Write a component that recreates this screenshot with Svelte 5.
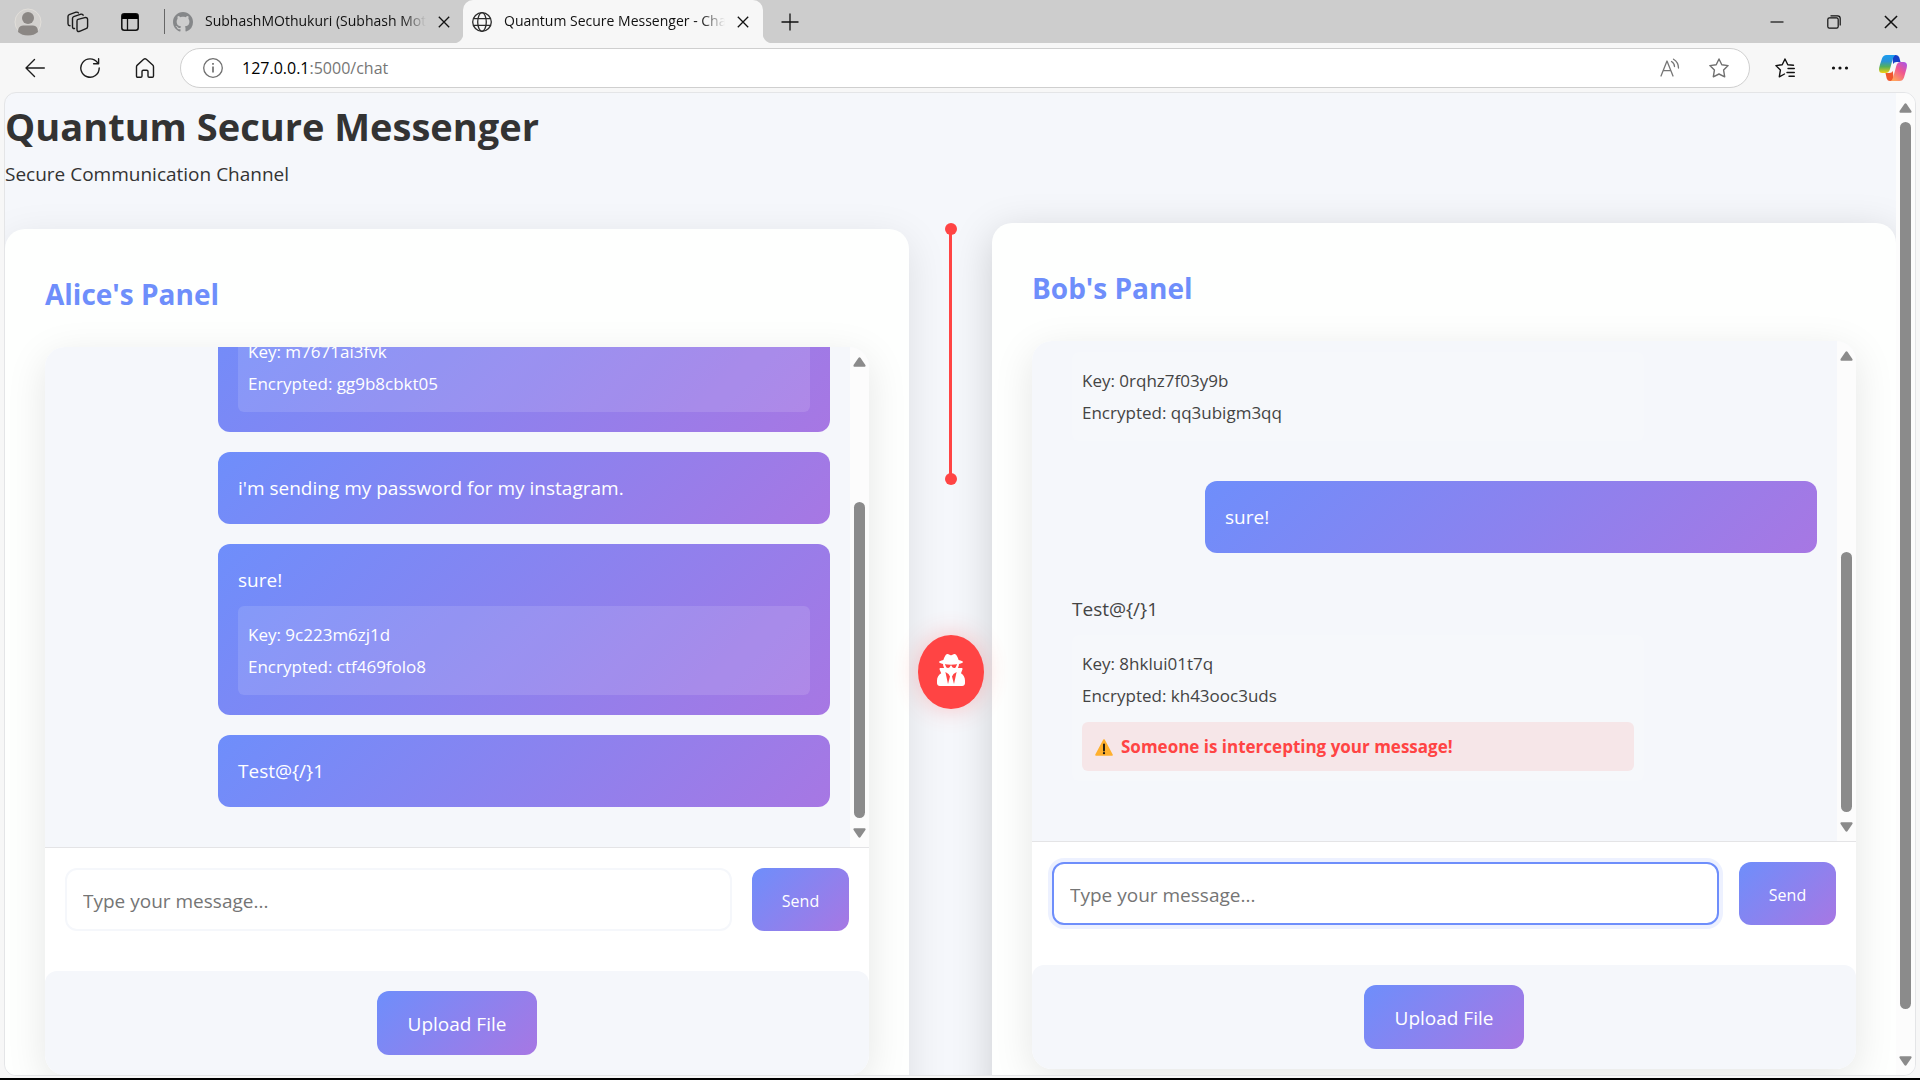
<script>
  const alice = {
    name: 'Alice',
    hovered: false,
    scroll: { before: 126, thumb: 316, after: 0 },
    messages: [
      { sent: true, text: '', key: 'm7671ai3fvk', encrypted: 'gg9b8cbkt05' },
      { sent: true, text: "i'm sending my password for my instagram." },
      { sent: true, text: 'sure!', key: '9c223m6zj1d', encrypted: 'ctf469folo8' },
      { sent: true, text: 'Test@{/}1' }
    ]
  };
  const bob = {
    name: 'Bob',
    hovered: true,
    scroll: { before: 182, thumb: 260, after: 0 },
    messages: [
      { sent: false, text: '', key: '0rqhz7f03y9b', encrypted: 'qq3ubigm3qq' },
      { sent: true, text: 'sure!' },
      { sent: false, text: 'Test@{/}1', key: '8hklui01t7q', encrypted: 'kh43ooc3uds', alert: 'Someone is intercepting your message!' }
    ]
  };
</script>

{#snippet scrollbar(s)}
  <div class="scrollbar" aria-hidden="true">
    <svg width="13" height="10" viewBox="0 0 13 10"><path d="M5.4.9Q6.5-.5 7.6.9L12.4 8Q13 9.6 11.6 9.8H1.4Q0 9.6.6 8Z" fill="#8b8b8b" /></svg>
    <div class="track">
      <span style="flex-grow: {s.before}"></span>
      <span class="thumb" style="flex-grow: {s.thumb}"></span>
      <span style="flex-grow: {s.after}"></span>
    </div>
    <svg width="13" height="10" viewBox="0 0 13 10"><path d="M5.4 9.1Q6.5 10.5 7.6 9.1L12.4 2Q13 .4 11.6.2H1.4Q0 .4.6 2Z" fill="#8b8b8b" /></svg>
  </div>
{/snippet}

{#snippet cross(size)}
  <svg width={size} height={size} viewBox="0 0 12 12" fill="none" stroke="#111" stroke-width="1.3"><path d="M.8.8l10.4 10.4M11.2.8.8 11.2" /></svg>
{/snippet}

{#snippet panel(p)}
  <section class="panel" class:hovered={p.hovered}>
    <h2>{p.name}'s Panel</h2>
    <div class="chat">
      <div class="history">
        <div class="messages">
          {#each p.messages as m}
            <article class="message" class:sent={m.sent}>
              <p class="text">{m.text}</p>
              {#if m.key}
                <div class="details" class:alerted={m.alert}>
                  <p>Key: {m.key}</p>
                  <p>Encrypted: {m.encrypted}</p>
                  {#if m.alert}
                    <div class="alert" role="alert">
                      <svg width="18" height="17" viewBox="0 0 18 17"><path d="M9 1 17 16H1Z" fill="#ffb02e" stroke="#ffb02e" stroke-width="1.6" stroke-linejoin="round" /><path d="M9 5.5v6" stroke="#111" stroke-width="1.8" stroke-linecap="round" /><circle cx="9" cy="14.2" r="1.1" fill="#111" /></svg>
                      <strong>{m.alert}</strong>
                    </div>
                  {/if}
                </div>
              {/if}
            </article>
          {/each}
        </div>
        {@render scrollbar(p.scroll)}
      </div>
      <form class="compose" onsubmit={(e) => e.preventDefault()}>
        <input type="text" class:focused={p.hovered} placeholder="Type your message..." aria-label="Message from {p.name}" />
        <button type="submit" class="send">Send</button>
      </form>
      <div class="upload"><button type="button">Upload File</button></div>
    </div>
  </section>
{/snippet}

<div class="browser">
  <header class="tabs">
    <div class="tools">
      <button aria-label="Profile">
        <svg width="28" height="28" viewBox="0 0 28 28"><circle cx="14" cy="14" r="13" fill="#d3d1ce" stroke="#e2dfda" /><circle cx="14" cy="10" r="6" fill="#8b8784" /><path d="M4 24q0-6.500 5-6.500h10q5 0 5 6.500-4 3.500-10 3.500T4 24z" fill="#8b8784" /></svg>
      </button>
      <button aria-label="Workspaces">
        <svg width="22" height="22" viewBox="0 0 22 22" fill="none" stroke="#1c1c1c" stroke-width="1.400" stroke-linejoin="round" stroke-linecap="round"><path d="M11 8.400 17.800 6.600q2.800-.5 2.800 2v6.800q0 1.800-1.600 2.300l-6.400 2.600q-2.600.7-2.600-1.500V10q0-1.300 1-1.600z" /><path d="M7.500 17.500q-2 .2-2-1.800V7.400q0-1.400 1.200-1.800L14 3.200q1.800-.4 2.200 1" /><path d="M3 14.800q-2-.2-2-2V5.400q0-1.400 1.200-1.800L9 1.200q1.800-.4 2.500.8" /></svg>
      </button>
      <button aria-label="Tab actions">
        <svg width="18" height="18" viewBox="0 0 18 18"><rect x=".8" y=".8" width="16.400" height="16.400" rx="2.500" fill="none" stroke="#111" stroke-width="1.500" /><path d="M1 6V3Q1 1 3 1h12q2 0 2 2v3z" /><path d="M6.500 6v11" stroke="#111" stroke-width="1.300" /></svg>
      </button>
    </div>
    <div class="tab">
      <svg width="20" height="20" viewBox="0 0 16 16" fill="#858789"><path d="M8 0C3.580 0 0 3.580 0 8c0 3.540 2.290 6.530 5.470 7.590.4.070.55-.17.55-.38 0-.19-.01-.82-.01-1.490-2.010.37-2.530-.49-2.690-.94-.09-.23-.48-.94-.82-1.130-.28-.15-.68-.52-.01-.53.63-.01 1.080.58 1.230.82.72 1.210 1.870.87 2.330.66.070-.52.280-.87.510-1.070-1.780-.2-3.640-.89-3.640-3.950 0-.87.310-1.590.82-2.150-.08-.2-.36-1.020.08-2.120 0 0 .67-.21 2.200.82.640-.18 1.320-.27 2-.27s1.360.09 2 .27c1.530-1.040 2.200-.82 2.200-.82.440 1.100.16 1.920.08 2.120.51.56.82 1.270.82 2.150 0 3.070-1.870 3.750-3.650 3.950.29.25.54.73.54 1.480 0 1.070-.01 1.930-.01 2.200 0 .21.150.46.55.38A8.010 8.010 0 0 0 16 8c0-4.420-3.580-8-8-8z" /></svg>
      <span class="title">SubhashMOthukuri (Subhash Mothukuri)</span>
      <button aria-label="Close tab">{@render cross(12)}</button>
    </div>
    <div class="tab active">
      <svg width="20" height="20" viewBox="0 0 20 20" fill="none" stroke="#2b2b2b" stroke-width="1.300"><circle cx="10" cy="10" r="9.300" /><ellipse cx="10" cy="10" rx="4.300" ry="9.300" /><path d="M1.500 6.700h17M1.500 13.300h17" /></svg>
      <span class="title">Quantum Secure Messenger - Chat</span>
      <button aria-label="Close tab">{@render cross(12)}</button>
    </div>
    <button class="new-tab" aria-label="New tab">
      <svg width="18" height="18" viewBox="0 0 18 18" stroke="#111" stroke-width="1.300"><path d="M9 .5v17M.5 9h17" /></svg>
    </button>
    <div class="window">
      <button aria-label="Minimize"><svg width="14" height="14" viewBox="0 0 14 14" stroke="#111" stroke-width="1.200"><path d="M.5 7h13" /></svg></button>
      <button aria-label="Restore"><svg width="14" height="14" viewBox="0 0 14 14" fill="none" stroke="#111" stroke-width="1.200"><rect x=".8" y="2.800" width="10.400" height="10.400" rx="1.600" /><path d="M3.500.8h7q2.700 0 2.700 2.700v7" /></svg></button>
      <button aria-label="Close window">{@render cross(14)}</button>
    </div>
  </header>

  <nav class="toolbar" aria-label="Browser">
    <div class="nav">
      <button aria-label="Back"><svg width="20" height="20" viewBox="0 0 20 20" fill="none" stroke="#1c1c1c" stroke-width="1.400" stroke-linecap="round" stroke-linejoin="round"><path d="M19.300 10H1M9.500 1.500 1 10l8.500 8.500" /></svg></button>
      <button aria-label="Refresh"><svg width="20" height="20" viewBox="0 0 20 20" fill="none" stroke="#1c1c1c" stroke-width="1.400" stroke-linecap="round" stroke-linejoin="round"><path d="M19.200 10A9.200 9.200 0 1 1 17.500 4.700M18.600.8v5h-5" /></svg></button>
      <button aria-label="Home"><svg width="20" height="20" viewBox="0 0 20 20" fill="none" stroke="#1c1c1c" stroke-width="1.400" stroke-linejoin="round"><path d="M1.500 8.800q0-1 .8-1.700l6.400-5.800q1.300-1 2.600 0l6.400 5.800q.8.7.8 1.700V18q0 1.200-1.200 1.200h-3.100q-1.200 0-1.200-1.200v-4.500q0-1.300-1.300-1.300H8.300q-1.300 0-1.300 1.300V18q0 1.200-1.200 1.200H2.700q-1.200 0-1.200-1.200z" /></svg></button>
    </div>
    <div class="address">
      <svg width="20" height="20" viewBox="0 0 20 20" fill="none" stroke="#707070" stroke-width="1.300"><circle cx="10" cy="10" r="9.300" /><path d="M10 8.500v6M10 5v1.800" stroke-width="1.700" /></svg>
      <span class="url">127.0.0.1<span>:5000/chat</span></span>
      <button aria-label="Read aloud"><svg width="20" height="20" viewBox="0 0 20 20" fill="none" stroke="#767676" stroke-width="1.300" stroke-linecap="round" stroke-linejoin="round"><path d="M1 18 7 3l6 15M3.200 12.600h7.600M11.500 3.500q3 1.800 3 5M13.500 1.200q5 3 5 8.800" /></svg></button>
      <button aria-label="Favorite"><svg width="20" height="20" viewBox="0 0 20 20" fill="none" stroke="#707070" stroke-width="1.400" stroke-linejoin="round"><path d="M10 1l2.800 5.700 6.300.9-4.500 4.500 1.100 6.700L10 16l-5.700 2.800 1.100-6.700L.9 7.600l6.300-.9z" /></svg></button>
    </div>
    <div class="actions">
      <button aria-label="Favorites list"><svg width="20" height="20" viewBox="0 0 20 20" fill="none" stroke="#111" stroke-width="1.400" stroke-linejoin="round" stroke-linecap="round"><path d="M18.500 7.200l-5.700-.5L10 1 7.200 6.700l-6.300.9 4.500 4.500-1.100 6.700L9.500 16M13 10.500h6.300M12 14.500h7.300M14 18.300h5.300" /></svg></button>
      <button aria-label="Settings and more"><svg width="18" height="18" viewBox="0 0 18 18" fill="#111"><circle cx="2.500" cy="9" r="1.600" /><circle cx="9" cy="9" r="1.600" /><circle cx="15.500" cy="9" r="1.600" /></svg></button>
      <button aria-label="Copilot">
        <svg width="28" height="26" viewBox="0 0 28 26">
          <defs>
            <linearGradient id="cpA" x1="0" y1="0" x2="0" y2="1"><stop offset="0" stop-color="#1b9df0" /><stop offset=".35" stop-color="#2a93d8" /><stop offset=".65" stop-color="#54b05b" /><stop offset="1" stop-color="#f4cf10" /></linearGradient>
            <linearGradient id="cpB" x1="1" y1="0" x2=".3" y2="1"><stop offset="0" stop-color="#a455ee" /><stop offset=".5" stop-color="#f0578f" /><stop offset="1" stop-color="#ffa35c" /></linearGradient>
          </defs>
          <path d="M13 0h4q2.500 0 3.300 2.500L21.500 7h-4q-2.500 0-3.300 2z" fill="#1640c8" />
          <path d="M15 26h-4q-2.500 0-3.300-2.500L6.500 18h4q2.500 0 3.300-2z" fill="#f0562d" />
          <path d="M7.500 0h9q-2 1-2.600 3.500L11 14q-1 4-4.500 4H3.500Q0 18 0 14.500q0-1.500 1-5L3 3.500Q4.200 0 7.500 0z" fill="url(#cpA)" />
          <path d="M20.500 26h-9q2-1 2.600-3.500L17 12q1-5 4.500-5h3q3.500 0 3.500 3.500 0 1.500-1 5l-2 7q-1.200 3.500-4.500 3.500z" fill="url(#cpB)" />
        </svg>
      </button>
    </div>
  </nav>

  <div class="viewport">
    <main>
      <div class="intro">
        <h1>Quantum Secure Messenger</h1>
        <p>Secure Communication Channel</p>
      </div>
      <div class="channel">
        {@render panel(alice)}
        <div class="link">
          <div class="wire"></div>
          <button class="spy" aria-label="Intercept messages">
            <svg width="28" height="32" viewBox="0 0 448 512" fill="#fff"><path d="M383.900 308.300l23.900-62.600c4-10.500-3.700-21.700-15-21.700h-58.500c11-18.900 17.800-40.600 17.800-64v-.3c39.200-7.800 64-19.100 64-31.700 0-13.300-27.300-25.100-70.100-33-9.200-32.800-27-65.800-40.600-82.800-9.500-11.900-25.900-15.600-39.500-8.800l-27.600 13.800c-9 4.500-19.600 4.500-28.600 0L182.100 3.400c-13.600-6.800-30-3.100-39.500 8.800-13.500 17-31.400 50-40.600 82.800-42.700 7.900-70 19.700-70 33 0 12.600 24.800 23.900 64 31.700v.3c0 23.400 6.800 45.100 17.800 64H56.300c-11.500 0-19.200 11.700-14.700 22.300l25.800 60.200C27.300 329.800 0 372.700 0 422.400v44.800C0 491.900 20.100 512 44.800 512h358.400c24.700 0 44.800-20.100 44.800-44.800v-44.800c0-48.400-25.800-90.400-64.100-114.100zM176 480l-41.600-192 49.600 32 24 40-32 120zm96 0l-32-120 24-40 49.600-32L272 480zm41.700-298.500c-3.900 11.900-7 24.600-16.500 33.400-10.100 9.300-48 22.400-64-25-2.800-8.400-15.400-8.400-18.300 0-17 50.200-56 32.400-64 25-9.500-8.800-12.700-21.500-16.500-33.400-.8-2.500-6.300-5.700-6.300-5.800v-10.800c28.300 3.600 61 5.800 96 5.800s67.700-2.100 96-5.800v10.800c-.1.100-5.600 3.200-6.400 5.800z" /></svg>
          </button>
        </div>
        {@render panel(bob)}
      </div>
    </main>
    {@render scrollbar({ before: 0, thumb: 888, after: 37 })}
  </div>
</div>

<style>
  :global(body) { margin: 0; }
  .browser, .browser * { box-sizing: border-box; }
  .browser {
    --accent: #6e8efb;
    --grad: linear-gradient(135deg, #6e8efb, #a777e3);
    --soft: #f5f7fb;
    display: flex;
    flex-direction: column;
    height: 100vh;
    overflow: hidden;
    background: #f7f7f7;
    border-bottom: 2px solid #000;
    font: 19px/32px "Open Sans", "Noto Sans", sans-serif;
    color: #333;
  }
  h1, h2, p { margin: 0; }
  button { font: inherit; border: 0; padding: 0; background: none; color: inherit; cursor: pointer; }
  svg { display: block; flex: none; }

  .tabs { display: flex; align-items: center; flex: none; height: 43px; background: #cdcdcd; font-size: 14px; color: #111; }
  .tools { display: flex; align-items: center; gap: 32px; padding-left: 14px; width: 164px; }
  .tools button:first-child { margin-right: -7px; }
  .tab { display: flex; align-items: center; gap: 12px; width: 299px; height: 43px; padding: 0 13px 0 9px; }
  .tab:not(.active) { background: linear-gradient(#666, #666) no-repeat 0 9px / 1px 25px; }
  .title { flex: 1; min-width: 0; overflow: hidden; white-space: nowrap; line-height: 41px; height: 43px; mask-image: linear-gradient(to right, #000 calc(100% - 24px), transparent); }
  .active { position: relative; width: 300px; padding: 0 14px 0 9px; background: #f7f7f7; border-radius: 10px 10px 0 0; }
  .active::before, .active::after { content: ""; position: absolute; bottom: 0; width: 10px; height: 10px; }
  .active::before { left: -10px; background: radial-gradient(circle at 0 0, #cdcdcd 10px, #f7f7f7 11px); }
  .active::after { right: -10px; background: radial-gradient(circle at 100% 0, #cdcdcd 10px, #f7f7f7 11px); }
  .new-tab { margin-left: 18px; }
  .window { display: flex; gap: 43px; margin-left: auto; padding-right: 22px; }

  .toolbar { display: flex; align-items: center; flex: none; height: 49px; padding: 0 13px 0 25px; }
  .nav { display: flex; gap: 35px; width: 155px; }
  .address { display: flex; align-items: center; flex: 1; height: 40px; padding: 0 20px 0 22px; border: 1px solid #cfcfcf; border-radius: 20px; background: #fff; }
  .url { flex: 1; margin-left: 19px; font-size: 16px; color: #000; }
  .url span { color: #767676; }
  .address button { margin-left: 29px; }
  .actions { display: flex; align-items: center; gap: 36px; padding-left: 25px; }
  .actions button:last-child { margin-left: -6px; }

  .viewport { display: flex; flex: 1; min-height: 0; margin: 0 4px 2px; border: 1px solid #e4e5e7; border-radius: 12px; overflow: hidden; background: var(--soft); }
  main { flex: 1; min-width: 0; overflow: hidden; }
  h1 { font-size: 38px; line-height: 66px; font-weight: 700; }
  .intro p { line-height: 30px; }
  .channel { display: grid; grid-template-columns: 1fr 83px 1fr; margin-top: 40px; }

  .panel { padding: 40px; border-radius: 20px; background: #fefffe; box-shadow: 0 10px 40px rgba(0, 0, 0, .1); }
  .hovered { transform: translateY(-6px); box-shadow: 0 10px 40px rgba(0, 0, 0, .17); }
  h2 { font-size: 28px; line-height: 50px; font-weight: 700; color: var(--accent); }
  .chat { margin-top: 28px; border-radius: 20px; overflow: hidden; background: #fff; box-shadow: 0 10px 40px rgba(0, 10, 0, .1); }
  .history { display: flex; height: 501px; border-bottom: 1px solid #e4e4e6; background: var(--soft); }
  .messages { display: flex; flex-direction: column; justify-content: flex-end; gap: 20px; flex: 1; min-width: 0; padding: 0 20px 40px; overflow: hidden; }
  .message { flex: none; width: 80%; padding: 20px; border-radius: 12px; }
  .sent { align-self: flex-end; background: var(--grad); color: #fff; }
  .text { min-height: 32px; }
  .details { margin-top: 10px; padding: 13px 10px 12px; border-radius: 6px; background: rgba(255, 255, 255, .12); font-size: 17px; }
  .alerted { padding-bottom: 10px; }
  .message:not(.sent) { color: #444; }
  .alert { display: flex; align-items: center; gap: 8px; margin-top: 10px; padding: 9px 13px 8px; border-radius: 6px; background: #f6e6e8; color: #ff4444; }

  .scrollbar { display: flex; flex-direction: column; align-items: center; flex: none; width: 19px; padding: 10px 0 9px; background: #fcfcfc; }
  .track { display: flex; flex-direction: column; flex: 1; width: 11px; margin: 9px 0 10px; }
  .track span { flex-basis: 0; }
  .thumb { border-radius: 6px; background: #8b8b8b; }

  .compose { display: flex; gap: 20px; padding: 20px; }
  input { flex: 1; min-width: 0; height: 63px; padding: 2px 16px 0; border: 2px solid var(--soft); border-radius: 12px; background: #fff; font: inherit; outline: 0; }
  input::placeholder { color: #757575; opacity: 1; }
  .focused { border-color: var(--accent); box-shadow: 0 0 0 4px rgba(110, 142, 251, .12); }
  .send, .upload button { padding-top: 2px; border-radius: 12px; background: var(--grad); color: #fff; }
  .send { width: 97px; font-size: 16px; }
  .upload { display: flex; justify-content: center; margin-top: 20px; padding: 20px; border-radius: 12px; background: var(--soft); }
  .upload button { min-width: 160px; height: 64px; }

  .link { display: flex; flex-direction: column; align-items: center; gap: 156px; position: relative; z-index: 1; }
  .wire { position: relative; width: 3px; height: 250px; background: #ff4444; }
  .wire::before, .wire::after { content: ""; position: absolute; left: 50%; width: 12px; height: 12px; border-radius: 50%; background: #ff4444; transform: translate(-50%, -50%); }
  .wire::before { top: 0; }
  .wire::after { top: 100%; }
  .spy { display: grid; place-items: center; width: 66px; height: 74px; padding-bottom: 4px; border-radius: 50%; background: #ff4444; box-shadow: 0 0 25px rgba(255, 68, 68, .3); }
</style>
